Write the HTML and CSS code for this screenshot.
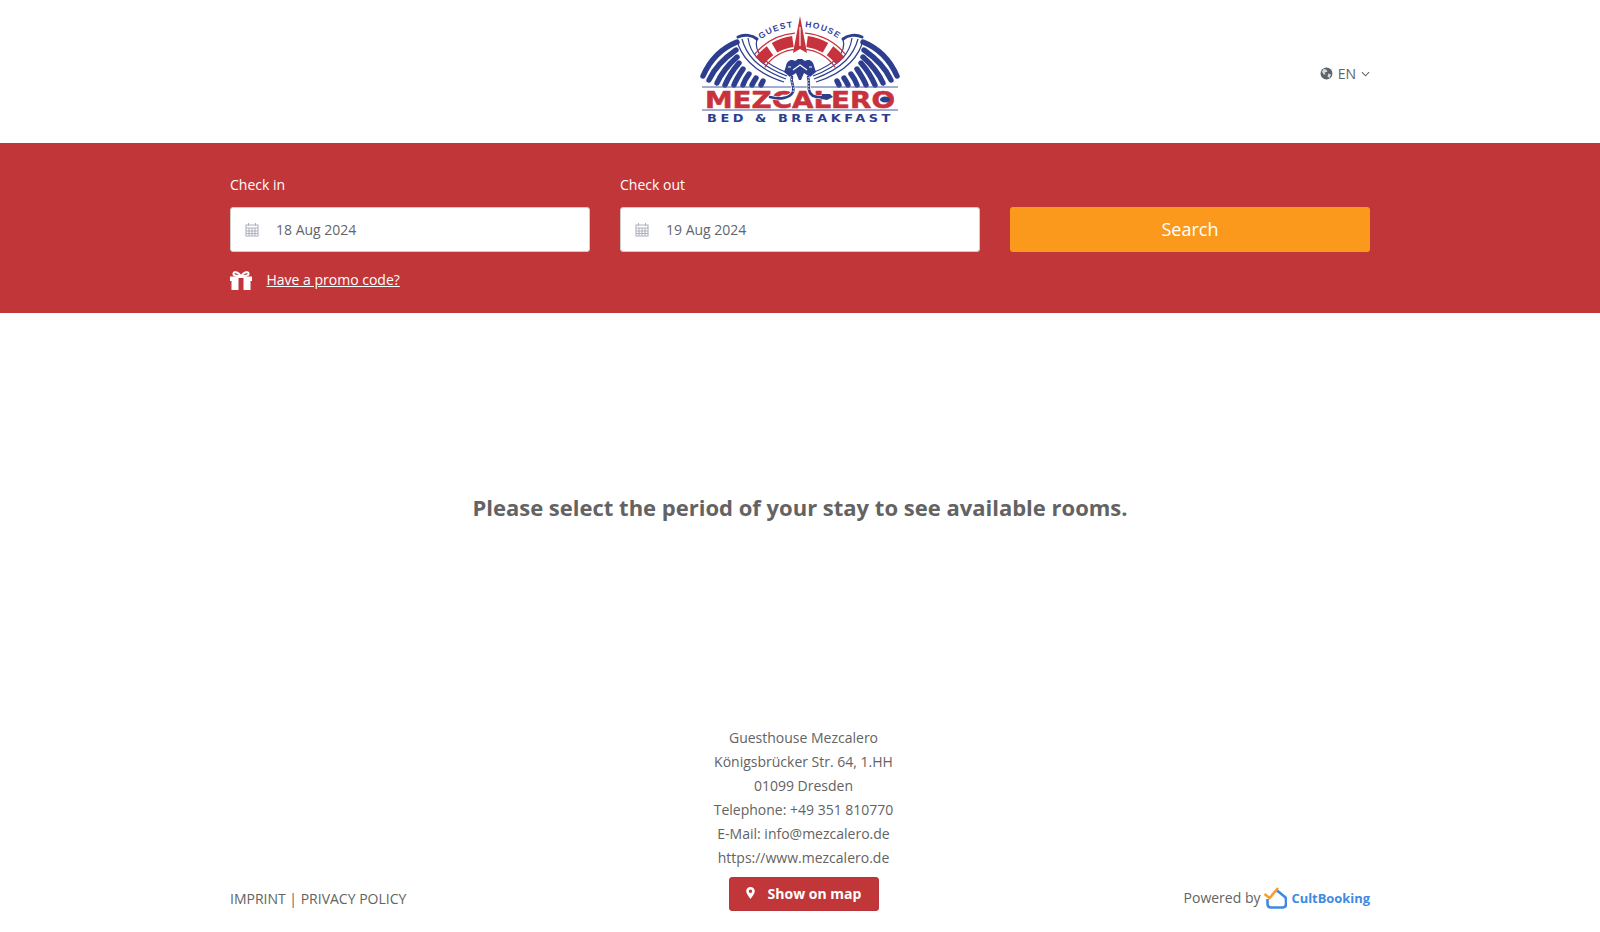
FILE: index.html
```html
<!DOCTYPE html>
<html lang="en">
<head>
<meta charset="utf-8">
<title>Guesthouse Mezcalero</title>
<link rel="stylesheet" href="styles.css">
</head>
<body>
<header class="topbar">
  <div class="wrap topbar-inner">
    <svg class="logo" viewBox="0 0 240 140" role="img" aria-label="Mezcalero Guest House Bed and Breakfast">
      <defs>
        <g id="wing">
          <g class="feathers">
            <path d="M23 76 C30 60 42 48 57 42"/>
            <path d="M29 80 C34 69 43 59 56 50"/>
            <path d="M37 83 C41 74 47 66 57 57"/>
            <path d="M45 85 C48 78 52 71 59 63"/>
            <path d="M54 85 C56 80 59 75 63 69"/>
            <path d="M63 85 C64 82 66 78 69 74"/>
            <path d="M72 85 C73 83 74 81 76 78"/>
            <path d="M81 85 L83 81"/>
          </g>
          <path class="wing-top" d="M58 37 C64 34 72 35 77 39"/>
          <g class="wing-lines">
            <path d="M57 40 C60 54 72 72 104 82"/>
            <path d="M62 39 C66 54 76 68 106 79"/>
            <path d="M68 38 C70 52 78 65 107 76"/>
            <path d="M77 39 C74 50 80 62 108 73"/>
          </g>
          <g class="arch-outline">
            <path d="M74.8 54.1 A59 59 0 0 1 114.9 33.2"/>
            <path d="M84.8 67.3 A43 43 0 0 1 116.3 49.2"/>
          </g>
          <path class="panel" d="M79.8 60.6 A51 51 0 0 1 90 50.7"/>
          <path class="panel" d="M94.5 47.8 A51 51 0 0 1 112.9 41.5"/>
        </g>
      </defs>
      <use href="#wing"/>
      <use href="#wing" transform="matrix(-1 0 0 1 240 0)"/>
      <path class="red" d="M120 16 L127 53 L120 49 L113 53Z"/>
      <path class="white-line" d="M120 27 L120 46"/>
      <path id="arc-guest" class="none" d="M80 40 A65 65 0 0 1 116 27"/>
      <path id="arc-house" class="none" d="M124 27 A65 65 0 0 1 160 40"/>
      <text class="arc-text"><textPath href="#arc-guest" startOffset="1">GUEST</textPath></text>
      <text class="arc-text"><textPath href="#arc-house" startOffset="1">HOUSE</textPath></text>
      <path class="blue" d="M106 66 C107 60 112 59 115 61 L118 59 L122 59 L125 61 C128 59 133 60 134 66 L136 72 L130 77 L124 73 L121 80 L119 80 L116 73 L110 77 L104 72Z"/>
      <path class="white-line" d="M113 70 L120 65 L127 70 M108 67 L111 67 M129 67 L132 67"/>
      <path class="rule" d="M22 87 H218 M22 110 H218"/>
      <text class="logo-name" x="25" y="108" textLength="190" lengthAdjust="spacingAndGlyphs">MEZCALERO</text>
      <ellipse class="blue" cx="205" cy="99.5" rx="5" ry="3"/>
      <path class="snake-halo" d="M90 97 C100 100 110 98 113 92 C115 86 110 82 112 77 M145 97 C136 98 130 96 129 90 C128 86 130 82 128 77"/>
      <path class="snake" d="M90 97 C100 100 110 98 113 92 C115 86 110 82 112 77 M145 97 C136 98 130 96 129 90 C128 86 130 82 128 77"/>
      <path class="snake-scale" d="M113 92 C115 86 110 82 112 77 M129 90 C128 86 130 82 128 77"/>
      <path class="blue" d="M142 94 L150 94 L153 97 L147 100 L141 99Z"/>
      <text class="logo-sub" x="27" y="122" textLength="187" lengthAdjust="spacingAndGlyphs">BED &amp; BREAKFAST</text>
    </svg>
    <div class="lang">
      <svg class="globe" viewBox="0 0 14 14"><circle cx="7" cy="7" r="6.4"/><path class="globe-land" d="M4 2 L7 3 L8 5 L5 6 L6 8 L4 8 L2 5Z M9 7 L12 8 L10 12 L8 10Z"/></svg>
      <span>EN</span>
      <svg class="caret" viewBox="0 0 10 6"><path d="M1 1 L5 5 L9 1"/></svg>
    </div>
  </div>
</header>

<section class="search">
  <div class="wrap">
    <div class="fields">
      <div class="field">
        <label class="field-label">Check in</label>
        <div class="date-input">
          <svg class="cal" viewBox="0 0 14 15"><path class="cal-body" d="M1 3 H13 V14 H1Z M3.5 1 V4 M10.5 1 V4 M1 6 H13 M1 9 H13 M1 11.5 H13 M4 6 V14 M7 6 V14 M10 6 V14"/></svg>
          <span>18 Aug 2024</span>
        </div>
      </div>
      <div class="field">
        <label class="field-label">Check out</label>
        <div class="date-input">
          <svg class="cal" viewBox="0 0 14 15"><path class="cal-body" d="M1 3 H13 V14 H1Z M3.5 1 V4 M10.5 1 V4 M1 6 H13 M1 9 H13 M1 11.5 H13 M4 6 V14 M7 6 V14 M10 6 V14"/></svg>
          <span>19 Aug 2024</span>
        </div>
      </div>
      <button class="search-btn" type="button">Search</button>
    </div>
    <div class="promo">
      <svg class="gift" viewBox="0 0 22 19"><path class="gift-fill" d="M0 5.5 H22 V10 H20.5 V19 H1.5 V10 H0Z"/><path class="gift-bow" d="M11 5 C8 1 4 0 3.5 2.5 C3 5 8 5 11 5 C14 5 19 5 18.5 2.5 C18 0 14 1 11 5Z"/><rect class="gift-ribbon" x="8.5" y="7" width="5" height="12"/></svg>
      <a class="promo-link" href="#">Have a promo code?</a>
    </div>
  </div>
</section>

<main class="message">
  <h1>Please select the period of your stay to see available rooms.</h1>
</main>

<footer class="footer">
  <div class="wrap footer-grid">
    <div class="legal">IMPRINT | PRIVACY POLICY</div>
    <div class="address">
      <div>Guesthouse Mezcalero</div>
      <div>Königsbrücker Str. 64, 1.HH</div>
      <div>01099 Dresden</div>
      <div>Telephone: +49 351 810770</div>
      <div>E-Mail: info@mezcalero.de</div>
      <div>https://www.mezcalero.de</div>
      <button class="map-btn" type="button">
        <svg class="pin" viewBox="0 0 10 14"><path fill-rule="evenodd" d="M5 0 C2 0 0 2.2 0 5 C0 8 5 14 5 14 C5 14 10 8 10 5 C10 2.2 8 0 5 0Z M5 3 A2 2 0 1 1 5 7 A2 2 0 1 1 5 3Z"/></svg>
        Show on map
      </button>
    </div>
    <div class="powered">
      <span>Powered by</span>
      <svg class="cb-logo" viewBox="0 0 23 22"><path class="cb-house" d="M11.5 4.5 L13 3.5 L21 10 Q22 11 22 12.5 V17 Q22 20.5 18.5 20.5 H7 Q3.5 20.5 3.5 17 V12"/><path class="cb-check" d="M0.5 7 L5.7 11 L14 1"/></svg>
      <span class="cb-name">CultBooking</span>
    </div>
  </div>
</footer>
</body>
</html>
```

FILE: styles.css
```css
* { box-sizing: border-box; }

html, body { height: 100%; }

body {
  margin: 0;
  min-height: 100vh;
  display: flex;
  flex-direction: column;
  overflow: hidden;
  background: #fff;
  color: #636363;
  font-family: "Open Sans", "Liberation Sans", sans-serif;
  font-size: 14px;
  line-height: 24px;
}

.wrap { width: 1140px; margin: 0 auto; }

/* Header */
.topbar { height: 143px; }

.topbar-inner {
  position: relative;
  height: 100%;
  display: flex;
  align-items: center;
  justify-content: flex-end;
  padding-top: 4px;
}

.logo {
  position: absolute;
  left: 450px;
  top: 0;
  width: 240px;
  height: 140px;
}

.feathers path { fill: none; stroke: #2e3e8f; stroke-width: 5.4; stroke-linecap: round; }
.wing-top { fill: none; stroke: #2e3e8f; stroke-width: 3; stroke-linecap: round; }
.wing-lines path { fill: none; stroke: #2e3e8f; stroke-width: 1.2; }
.arch-outline path { fill: none; stroke: #c8323c; stroke-width: 1.2; }
.panel { fill: none; stroke: #c8323c; stroke-width: 11; }
.red { fill: #c8323c; }
.blue { fill: #2e3e8f; }
.white-line { fill: none; stroke: #fff; stroke-width: 1.2; }
.none { fill: none; }
.rule { fill: none; stroke: #4a58a5; stroke-width: 1; }
.snake-halo { fill: none; stroke: #fff; stroke-width: 4; }
.snake { fill: none; stroke: #2e3e8f; stroke-width: 2.6; stroke-linecap: round; }
.snake-scale { fill: none; stroke: #fff; stroke-width: .9; stroke-dasharray: 1.5 1.5; }

.arc-text {
  fill: #35449a;
  font-family: "Liberation Sans", sans-serif;
  font-size: 8.5px;
  font-weight: 700;
  letter-spacing: 1.2px;
}

.logo-name {
  fill: #c8323c;
  stroke: #c8323c;
  stroke-width: .5;
  font-family: "DejaVu Sans", sans-serif;
  font-size: 23px;
  font-weight: 700;
}

.logo-sub {
  fill: #2e3e8f;
  font-family: "DejaVu Sans", sans-serif;
  font-size: 11px;
  font-weight: 700;
  letter-spacing: 3px;
}

.lang {
  display: flex;
  align-items: center;
  gap: 5px;
  color: #5f6368;
  font-size: 14px;
}

.globe { width: 13px; height: 13px; }
.globe circle { fill: #5f6368; }
.globe-land { fill: #fff; opacity: .75; }
.caret { width: 9px; height: 6px; }
.caret path { fill: none; stroke: #5f6368; stroke-width: 1.2; }

/* Search band */
.search {
  height: 170px;
  padding-top: 30px;
  background: #c03639;
  color: #fff;
}

.fields {
  display: grid;
  grid-template-columns: repeat(3, 360px);
  column-gap: 30px;
  align-items: end;
}

.field-label {
  display: block;
  margin-bottom: 10px;
  font-size: 14px;
  line-height: 24px;
}

.date-input {
  height: 45px;
  display: flex;
  align-items: center;
  gap: 17px;
  padding-left: 14px;
  background: #fff;
  border: 1px solid #ccc;
  border-radius: 3px;
  color: #5f6670;
}

.cal { width: 14px; height: 15px; }
.cal-body { fill: none; stroke: #b0b2c2; stroke-width: 1.1; }

.search-btn {
  height: 45px;
  padding: 0 0 2px;
  border: 0;
  border-radius: 3px;
  background: #fa991c;
  color: #fff;
  font-family: inherit;
  font-size: 18px;
}

.promo {
  display: flex;
  align-items: center;
  gap: 14.5px;
  margin-top: 16px;
}

.gift { width: 22px; height: 19px; }
.gift-fill { fill: #fff; }
.gift-bow { fill: none; stroke: #fff; stroke-width: 2; }
.gift-ribbon { fill: #c03639; }

.promo-link { color: #fff; font-size: 14px; }

/* Message */
.message {
  flex: 1;
  display: flex;
  align-items: center;
  justify-content: center;
  padding-bottom: 4px;
}

.message h1 {
  margin: 0;
  font-size: 22px;
  font-weight: 700;
  line-height: 30px;
}

/* Footer */
.footer { padding: 22px 0 21px; }

.footer-grid {
  display: grid;
  grid-template-columns: 387px 1fr 380px;
  align-items: end;
}

.legal { line-height: 24px; }

.address { text-align: center; }

.map-btn {
  display: inline-flex;
  align-items: center;
  justify-content: center;
  gap: 13px;
  width: 150px;
  height: 34px;
  margin-top: 7px;
  padding: 0 0 2px;
  border: 1px solid #b8343a;
  border-radius: 3px;
  background: #c03639;
  color: #fff;
  font-family: inherit;
  font-size: 14px;
  font-weight: 700;
}

.pin { width: 9px; height: 12px; fill: #fff; }

.powered {
  display: flex;
  align-items: center;
  justify-content: flex-end;
  gap: 3px;
  padding-bottom: 1px;
}

.cb-logo { width: 23px; height: 22px; margin-left: 1px; }
.cb-house { fill: none; stroke: #3f8ae0; stroke-width: 2.6; stroke-linejoin: round; }
.cb-check { fill: none; stroke: #f5a02a; stroke-width: 2.6; }
.cb-name { color: #3f8ae0; font-size: 12.9px; font-weight: 700; margin-left: 1px; }
```
